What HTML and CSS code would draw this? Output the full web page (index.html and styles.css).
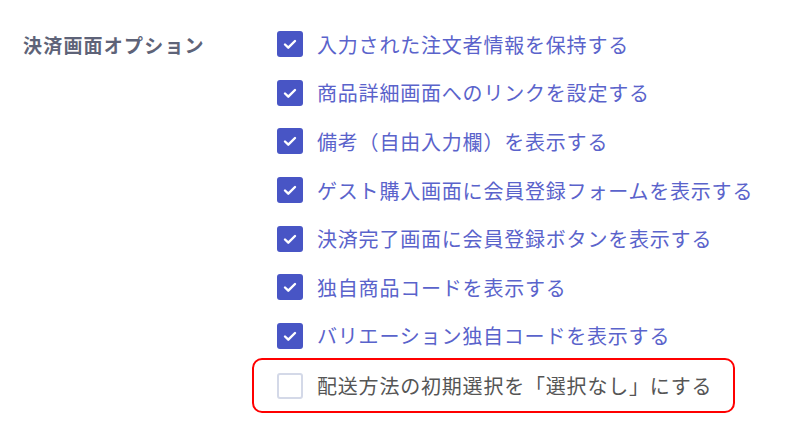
FILE: index.html
```html
<!DOCTYPE html>
<html lang="ja">
<head>
  <meta charset="UTF-8" />
  <title>決済画面オプション</title>
  <link rel="stylesheet" href="styles.css">
</head>
<body>
  <div class="setting">
    <div class="setting-label">決済画面オプション</div>
    <div class="options">
      <label class="option checked"><span class="box"><svg viewBox="0 0 26 26"><path d="M8 13.5l3.3 3.2L18 10" /></svg></span>入力された注文者情報を保持する</label>
      <label class="option checked"><span class="box"><svg viewBox="0 0 26 26"><path d="M8 13.5l3.3 3.2L18 10" /></svg></span>商品詳細画面へのリンクを設定する</label>
      <label class="option checked"><span class="box"><svg viewBox="0 0 26 26"><path d="M8 13.5l3.3 3.2L18 10" /></svg></span>備考（自由入力欄）を表示する</label>
      <label class="option checked"><span class="box"><svg viewBox="0 0 26 26"><path d="M8 13.5l3.3 3.2L18 10" /></svg></span>ゲスト購入画面に会員登録フォームを表示する</label>
      <label class="option checked"><span class="box"><svg viewBox="0 0 26 26"><path d="M8 13.5l3.3 3.2L18 10" /></svg></span>決済完了画面に会員登録ボタンを表示する</label>
      <label class="option checked"><span class="box"><svg viewBox="0 0 26 26"><path d="M8 13.5l3.3 3.2L18 10" /></svg></span>独自商品コードを表示する</label>
      <label class="option checked"><span class="box"><svg viewBox="0 0 26 26"><path d="M8 13.5l3.3 3.2L18 10" /></svg></span>バリエーション独自コードを表示する</label>
      <label class="option highlight"><span class="box"></span>配送方法の初期選択を「選択なし」にする</label>
    </div>
  </div>
</body>
</html>
```

FILE: styles.css
```css
body {
  margin: 0;
  background: #fff;
  font-family: "Noto Sans CJK JP", "Noto Sans", sans-serif;
}
.setting {
  display: flex;
  padding: 20px 0 0 23px;
}
.setting-label {
  width: 254px;
  height: 48px;
  display: flex;
  align-items: center;
  font-size: 19px;
  font-weight: bold;
  color: #5e6378;
  letter-spacing: 1.2px;
}
.options {
  display: flex;
  flex-direction: column;
}
.option {
  height: 48.6px;
  display: flex;
  align-items: center;
  font-size: 20px;
  color: #5a63cb;
  letter-spacing: 0.8px;
}
.box {
  width: 26px;
  height: 26px;
  box-sizing: border-box;
  border-radius: 3px;
  margin-right: 14px;
  flex-shrink: 0;
}
.checked .box {
  background: #4855c5;
}
.box svg {
  display: block;
  width: 26px;
  height: 26px;
}
.box path {
  fill: none;
  stroke: #fff;
  stroke-width: 2.4;
  stroke-linecap: round;
  stroke-linejoin: round;
}
.highlight {
  color: #555;
  height: 55px;
  width: 483px;
  box-sizing: border-box;
  margin: -2px 0 0 -25px;
  padding-left: 23px;
  border: 2px solid #f00;
  border-radius: 10px;
}
.highlight .box {
  border: 2px solid #d4d9e8;
  background: #fff;
}
```
